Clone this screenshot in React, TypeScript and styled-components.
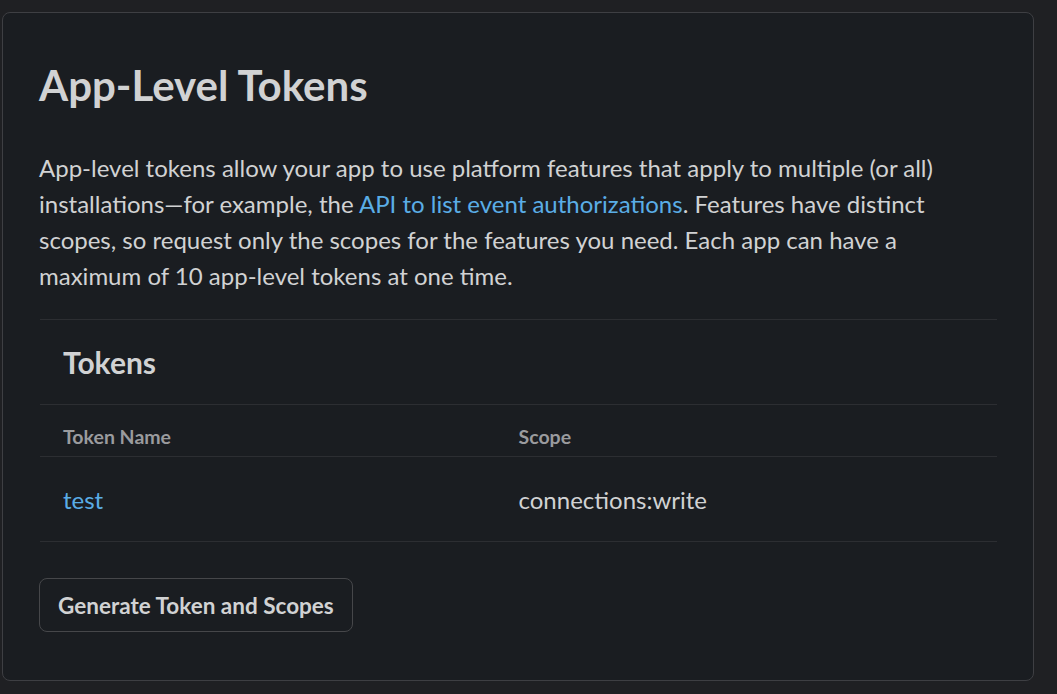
import React from 'react';
import styled, { createGlobalStyle } from 'styled-components';

const GlobalStyle = createGlobalStyle`
  html, body {
    margin: 0;
    padding: 0;
    background: #1f2023;
  }
  body {
    font-family: Lato, "Noto Sans", sans-serif;
    -webkit-font-smoothing: antialiased;
  }
`;

const Page = styled.div`
  width: 1057px;
  height: 694px;
  padding: 12px 0 0 2px;
  box-sizing: border-box;
  overflow: hidden;
`;

const Card = styled.section`
  width: 1032px;
  height: 669px;
  box-sizing: border-box;
  background: #1a1d21;
  border: 1px solid #3e3f43;
  border-radius: 8px;
  padding: 47px 36px 0 36px;
  color: #d1d2d3;
`;

const Title = styled.h1`
  margin: 0;
  font-size: 42px;
  font-weight: 700;
  line-height: 50px;
  color: #d1d2d3;
`;

const Intro = styled.p`
  margin: 40px 0 0;
  font-size: 24px;
  line-height: 36px;
  color: #d1d2d3;
`;

const Link = styled.a`
  color: #5aade6;
  text-decoration: none;
`;

const Divider = styled.hr`
  margin: 0;
  border: none;
  border-top: 1px solid #2c2e32;
`;

const Section = styled.div`
  margin-top: 25px;
  margin-left: 1px;
`;

const SectionTitle = styled.h2`
  margin: 0;
  padding: 0 23px;
  height: 84px;
  display: flex;
  align-items: center;
  font-size: 30px;
  font-weight: 700;
  color: #d1d2d3;
`;

const Row = styled.div<{ $head?: boolean }>`
  display: grid;
  grid-template-columns: 1fr 1fr;
  align-items: ${p => (p.$head ? 'end' : 'center')};
  box-sizing: border-box;
  height: ${p => (p.$head ? '52px' : '85px')};
  padding-bottom: ${p => (p.$head ? '8px' : '0')};
  border-top: 1px solid #2c2e32;
  font-size: ${p => (p.$head ? '19.5px' : '24px')};
  font-weight: ${p => (p.$head ? 700 : 400)};
  color: ${p => (p.$head ? '#9a9b9e' : '#d1d2d3')};
`;

const Cell = styled.div<{ $first?: boolean }>`
  padding-left: ${p => (p.$first ? '23px' : '0')};
`;

const Button = styled.button`
  margin-top: 36px;
  height: 54px;
  padding: 0 18px;
  background: transparent;
  border: 1px solid #46474a;
  border-radius: 8px;
  font-family: inherit;
  font-size: 22.5px;
  font-weight: 700;
  color: #d1d2d3;
  cursor: pointer;
`;

export default function App() {
  return (
    <Page>
      <GlobalStyle />
      <Card>
        <Title>App-Level Tokens</Title>
        <Intro>
          App-level tokens allow your app to use platform features that apply to multiple (or all)
          installations—for example, the <Link href="#">API to list event authorizations</Link>.
          Features have distinct scopes, so request only the scopes for the features you need. Each
          app can have a maximum of 10 app-level tokens at one time.
        </Intro>
        <Section>
          <Divider />
          <SectionTitle>Tokens</SectionTitle>
          <Row $head>
            <Cell $first>Token Name</Cell>
            <Cell>Scope</Cell>
          </Row>
          <Row>
            <Cell $first>
              <Link href="#">test</Link>
            </Cell>
            <Cell>connections:write</Cell>
          </Row>
          <Divider />
        </Section>
        <Button>Generate Token and Scopes</Button>
      </Card>
    </Page>
  );
}
